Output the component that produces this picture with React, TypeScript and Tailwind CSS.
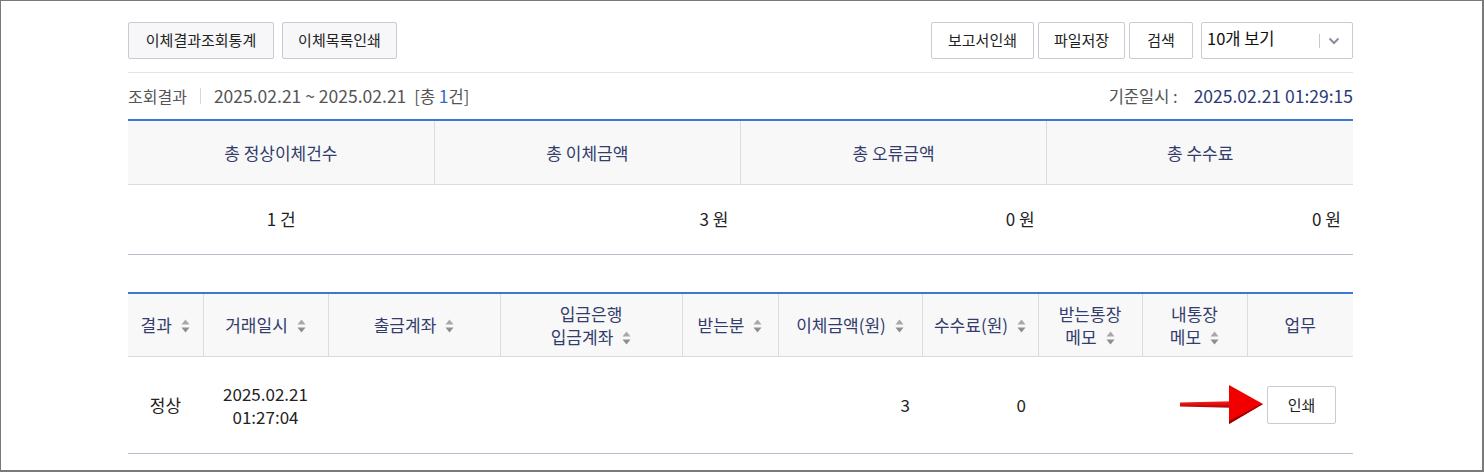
import React from 'react'

const font = { fontFamily: '"Noto Sans CJK KR", "Noto Sans", sans-serif' }

function SortIcon() {
  return (
    <svg width="9" height="14" viewBox="0 0 9 14" className="inline-block ml-[9px] align-[-1px]">
      <path d="M4.5 0.5 L8.5 5.5 L0.5 5.5 Z" fill="#a8a8ac" />
      <path d="M4.5 13.5 L8.5 8.5 L0.5 8.5 Z" fill="#8e8e92" />
    </svg>
  )
}

function Btn({ label, w, gray }: { label: string; w: string; gray?: boolean }) {
  return (
    <button
      className={`${w} h-[37px] border border-[#c9cad3] rounded-[2px] text-[15px] text-[#222] ${
        gray ? 'bg-[#f7f7f9]' : 'bg-white'
      }`}
    >
      {label}
    </button>
  )
}

const summaryCols = ['총 정상이체건수', '총 이체금액', '총 오류금액', '총 수수료']

type Col = { w: string; lines: string[]; sort: boolean }

const cols: Col[] = [
  { w: 'w-[75px]', lines: ['결과'], sort: true },
  { w: 'w-[125px]', lines: ['거래일시'], sort: true },
  { w: 'w-[172px]', lines: ['출금계좌'], sort: true },
  { w: 'w-[182px]', lines: ['입금은행', '입금계좌'], sort: true },
  { w: 'w-[96px]', lines: ['받는분'], sort: true },
  { w: 'w-[144px]', lines: ['이체금액(원)'], sort: true },
  { w: 'w-[116px]', lines: ['수수료(원)'], sort: true },
  { w: 'w-[104px]', lines: ['받는통장', '메모'], sort: true },
  { w: 'w-[105px]', lines: ['내통장', '메모'], sort: true },
  { w: '', lines: ['업무'], sort: false },
]

export default function App() {
  return (
    <div
      style={font}
      className="w-[1484px] h-[472px] bg-white border-t border-l border-r-2 border-b-2 border-[#7a7a7a] overflow-hidden"
    >
      <div className="w-[1225px] ml-[127px] pt-[21px]">
        {/* top buttons */}
        <div className="flex items-center justify-between pb-[13px] border-b border-[#e3e3e6]">
          <div className="flex gap-[8px]">
            <Btn label="이체결과조회통계" w="w-[146px]" gray />
            <Btn label="이체목록인쇄" w="w-[115px]" gray />
          </div>
          <div className="flex gap-[4px]">
            <Btn label="보고서인쇄" w="w-[103px]" />
            <Btn label="파일저장" w="w-[87px]" />
            <Btn label="검색" w="w-[64px]" />
            <div className="ml-[4px] w-[152px] h-[37px] border border-[#c9cad3] rounded-[2px] flex items-start justify-between pl-[5px] pr-[12px]">
              <span className="text-[16.5px] text-[#111] leading-none pt-[7px]">10개 보기</span>
              <div className="flex items-center h-full gap-[8px]">
                <span className="w-px h-[14px] bg-[#c8c8cc]" />
                <svg width="12" height="8" viewBox="0 0 12 8">
                  <path d="M1.5 1.5 L6 6 L10.5 1.5" fill="none" stroke="#8a8f9e" strokeWidth="2" />
                </svg>
              </div>
            </div>
          </div>
        </div>

        {/* result line */}
        <div className="flex items-center justify-between h-[46px] text-[16px]">
          <div className="flex items-center">
            <span className="text-[#555]">조회결과</span>
            <span className="w-px h-[16px] bg-[#d8d8dc] mx-[13px]" />
            <span className="text-[#555] text-[17.5px]">2025.02.21 ~ 2025.02.21</span>
            <span className="text-[#555] text-[16.5px] ml-[8px]">
              [총 <span className="text-[#2f6bd0] text-[17.5px]">1</span>건]
            </span>
          </div>
          <div className="flex items-center">
            <span className="text-[#555] text-[16.5px]">기준일시 :</span>
            <span className="text-[#2c3a78] text-[17.5px] ml-[16px]">2025.02.21 01:29:15</span>
          </div>
        </div>

        {/* summary table */}
        <table className="w-full border-collapse border-t-2 border-[#3a7bd0] text-[17px] table-fixed">
          <thead>
            <tr className="h-[64px] bg-[#f8f8f8]">
              {summaryCols.map((c, i) => (
                <th
                  key={c}
                  className={`font-normal text-[#333d6d] border-b border-[#dcdcdf] ${
                    i > 0 ? 'border-l border-l-[#dcdcdf]' : ''
                  }`}
                >
                  {c}
                </th>
              ))}
            </tr>
          </thead>
          <tbody>
            <tr className="h-[70px] text-[#222] border-b border-[#b9bdcd]">
              <td className="text-center">1 건</td>
              <td className="text-right pr-[12px]">3 원</td>
              <td className="text-right pr-[12px]">0 원</td>
              <td className="text-right pr-[12px]">0 원</td>
            </tr>
          </tbody>
        </table>

        {/* detail table */}
        <table className="w-full mt-[37px] border-collapse border-t-2 border-[#3a7bd0] text-[17px] table-fixed">
          <thead>
            <tr className="h-[64px] bg-[#f8f8f8]">
              {cols.map((c, i) => (
                <th
                  key={i}
                  className={`${c.w} font-normal text-[#333d6d] leading-[23px] border-b border-[#dcdcdf] ${
                    i > 0 ? 'border-l border-l-[#dcdcdf]' : ''
                  }`}
                >
                  {c.lines.map((l, j) => (
                    <div key={j} className="whitespace-nowrap">
                      {l}
                      {c.sort && j === c.lines.length - 1 && <SortIcon />}
                    </div>
                  ))}
                </th>
              ))}
            </tr>
          </thead>
          <tbody>
            <tr className="h-[97px] text-[#222] border-b border-[#b9bdcd]">
              <td className="text-center">정상</td>
              <td className="text-center leading-[23px]">
                2025.02.21
                <br />
                01:27:04
              </td>
              <td />
              <td />
              <td />
              <td className="text-right pr-[12px]">3</td>
              <td className="text-right pr-[12px]">0</td>
              <td />
              <td className="relative">
                <svg
                  width="86"
                  height="42"
                  viewBox="0 0 86 42"
                  className="absolute left-[37px] top-[27px]"
                >
                  <defs>
                    <linearGradient id="shaft" x1="0" y1="0" x2="0" y2="1">
                      <stop offset="0" stopColor="#ff2020" />
                      <stop offset="1" stopColor="#b00000" />
                    </linearGradient>
                  </defs>
                  <path d="M1 18.5 L52 17.2 L52 23.8 L1 22.5 Z" fill="url(#shaft)" />
                  <path d="M50 1 L84 20 L50 40 Z" fill="#f20000" />
                  <path d="M50 40 L84 20 L82 20 L50 37 Z" fill="#a00000" />
                </svg>
              </td>
              <td className="text-center">
                <button className="w-[69px] h-[38px] border border-[#c9cad3] rounded-[2px] bg-white text-[15px] text-[#222] ml-[3px]">
                  인쇄
                </button>
              </td>
            </tr>
          </tbody>
        </table>
      </div>
    </div>
  )
}
